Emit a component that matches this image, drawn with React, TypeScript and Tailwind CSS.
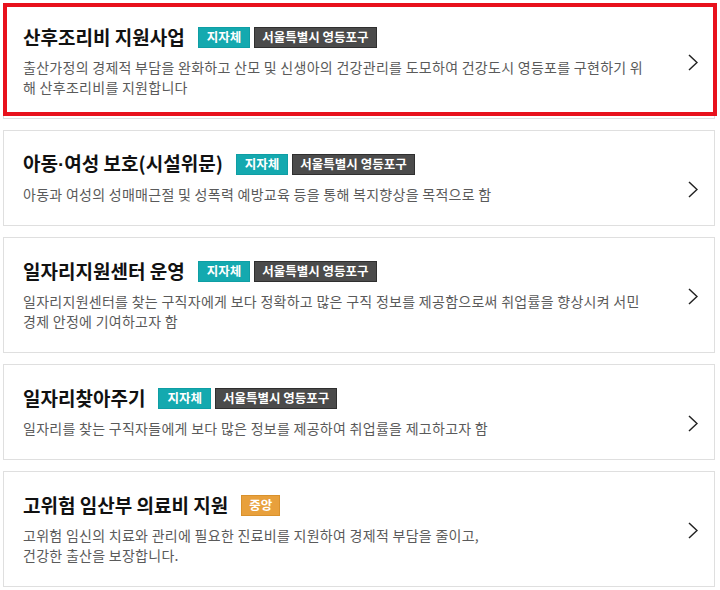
import type { ReactNode } from "react";

type Program = {
  title: ReactNode;
  key: string;
  tags: string[];
  lines: string[];
  highlight?: boolean;
};

const programs: Program[] = [
  {
    key: "postpartum",
    title: "산후조리비 지원사업",
    tags: ["local", "region"],
    lines: [
      "출산가정의 경제적 부담을 완화하고 산모 및 신생아의 건강관리를 도모하여 건강도시 영등포를 구현하기 위",
      "해 산후조리비를 지원합니다",
    ],
    highlight: true,
  },
  {
    key: "protection",
    title: (
      <>
        아동
        <span style={{ fontFamily: "'Liberation Sans', sans-serif" }}>·</span>
        여성 보호(시설위문)
      </>
    ),
    tags: ["local", "region"],
    lines: ["아동과 여성의 성매매근절 및 성폭력 예방교육 등을 통해 복지향상을 목적으로 함"],
  },
  {
    key: "jobcenter",
    title: "일자리지원센터 운영",
    tags: ["local", "region"],
    lines: [
      "일자리지원센터를 찾는 구직자에게 보다 정확하고 많은 구직 정보를 제공함으로써 취업률을 향상시켜 서민",
      "경제 안정에 기여하고자 함",
    ],
  },
  {
    key: "jobfind",
    title: "일자리찾아주기",
    tags: ["local", "region"],
    lines: ["일자리를 찾는 구직자들에게 보다 많은 정보를 제공하여 취업률을 제고하고자 함"],
  },
  {
    key: "highrisk",
    title: "고위험 임산부 의료비 지원",
    tags: ["central"],
    lines: [
      "고위험 임신의 치료와 관리에 필요한 진료비를 지원하여 경제적 부담을 줄이고,",
      "건강한 출산을 보장합니다.",
    ],
  },
];

function Tag({ kind }: { kind: string }) {
  if (kind === "local") {
    return (
      <span className="flex h-[21px] items-center border border-[#0f9ea4] bg-[#14a9af] px-[8px] text-[12.5px] font-bold text-white">
        지자체
      </span>
    );
  }
  if (kind === "central") {
    return (
      <span className="flex h-[21px] items-center border border-[#d9912c] bg-[#e8a03c] px-[7px] text-[12.5px] font-bold text-white">
        중앙
      </span>
    );
  }
  return (
    <span className="flex h-[21px] items-center border border-[#2f2f2f] bg-[#4b4b4b] px-[7px] text-[12.5px] font-bold text-white">
      서울특별시 영등포구
    </span>
  );
}

function Chevron() {
  return (
    <svg width="10" height="17" viewBox="0 0 10 17" fill="none">
      <polyline
        points="1,1 9,8.5 1,16"
        stroke="#222"
        strokeWidth="1.5"
        strokeLinejoin="miter"
      />
    </svg>
  );
}

export default function App() {
  return (
    <main
      className="min-h-[590px] w-[720px] bg-white pt-[3px]"
      style={{ fontFamily: "'Noto Sans CJK KR', 'Noto Sans', sans-serif" }}
    >
      <div className="ml-[3px] flex w-[712px] flex-col gap-[11px]">
        {programs.map((p) => (
          <div
            key={p.key}
            className="relative flex border border-[#dfdfdf] bg-white pb-[21px] pl-[19px] pr-[16px] pt-[20px]"
          >
            <div className="flex-1 pr-[28px]">
              <div className="flex h-[26px] items-center">
                <h3 className="whitespace-nowrap text-[19px] font-bold leading-[26px] text-[#111]">
                  {p.title}
                </h3>
                <div className="ml-[13px] flex gap-[4px]">
                  {p.tags.map((t) => (
                    <Tag key={t} kind={t} />
                  ))}
                </div>
              </div>
              <p className="mt-[7px] whitespace-nowrap text-[14px] leading-[20px] tracking-[0.02em] text-[#5a5a5a]">
                {p.lines.map((l, i) => (
                  <span key={i} className="block">
                    {l}
                  </span>
                ))}
              </p>
            </div>
            <div className="mt-[30px]">
              <Chevron />
            </div>
            {p.highlight && (
              <div className="pointer-events-none absolute left-[-1px] top-[-1px] h-[113px] w-[714px] border-[4px] border-[#e8111c]" />
            )}
          </div>
        ))}
      </div>
    </main>
  );
}
